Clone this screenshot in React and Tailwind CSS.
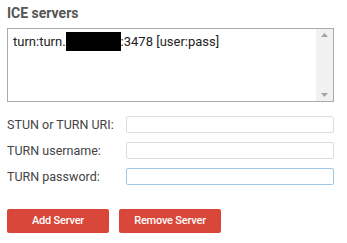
export default function App() {
  return (
    <div className="w-[347px] h-[243px] bg-white px-[7px] pt-[5px] text-[#444] [font-family:Roboto,'Liberation_Sans',sans-serif]">
      <h2 className="text-[14px] font-bold leading-[16px] text-[#555]">ICE servers</h2>

      {/* server list */}
      <div className="mt-[7px] flex h-[74px] w-[327px] border border-[#aaa] bg-white">
        <div className="flex-1 pl-[5px] pt-[3px] text-[13px] leading-[18px] text-[#222]">
          turn:turn.
          <span className="inline-block h-[19px] w-[55px] bg-black align-[-5px]"></span>
          :3478 [user:pass]
        </div>
        <div className="flex w-[17px] flex-col items-center justify-between bg-[#f1f1f1] py-[4px]">
          <svg width="7" height="4" viewBox="0 0 7 4"><path d="M3.5 0L7 4H0z" fill="#a3a3a3" /></svg>
          <svg width="7" height="4" viewBox="0 0 7 4"><path d="M0 0h7L3.5 4z" fill="#a3a3a3" /></svg>
        </div>
      </div>

      {/* fields */}
      <div className="mt-[14px] flex flex-col gap-[9px] text-[12.5px]">
        <div className="flex items-center">
          <label className="w-[119px] leading-[17px]">STUN or TURN URI:</label>
          <div className="h-[17px] w-[208px] rounded-[2px] border border-[#ddd] bg-white"></div>
        </div>
        <div className="flex items-center">
          <label className="w-[119px] leading-[17px]">TURN username:</label>
          <div className="h-[17px] w-[208px] rounded-[2px] border border-[#ddd] bg-white"></div>
        </div>
        <div className="flex items-center">
          <label className="w-[119px] leading-[17px]">TURN password:</label>
          <div className="h-[17px] w-[208px] rounded-[2px] border border-[#9ec6e6] bg-white"></div>
        </div>
      </div>

      {/* actions */}
      <div className="mt-[24px] flex gap-[10px]">
        <button className="h-[24px] w-[102px] rounded-[2px] bg-[#d9473a] text-[11px] font-medium tracking-[-0.2px] text-white">Add Server</button>
        <button className="h-[24px] w-[102px] rounded-[2px] bg-[#d9473a] text-[11px] font-medium tracking-[-0.2px] text-white">Remove Server</button>
      </div>
    </div>
  );
}
